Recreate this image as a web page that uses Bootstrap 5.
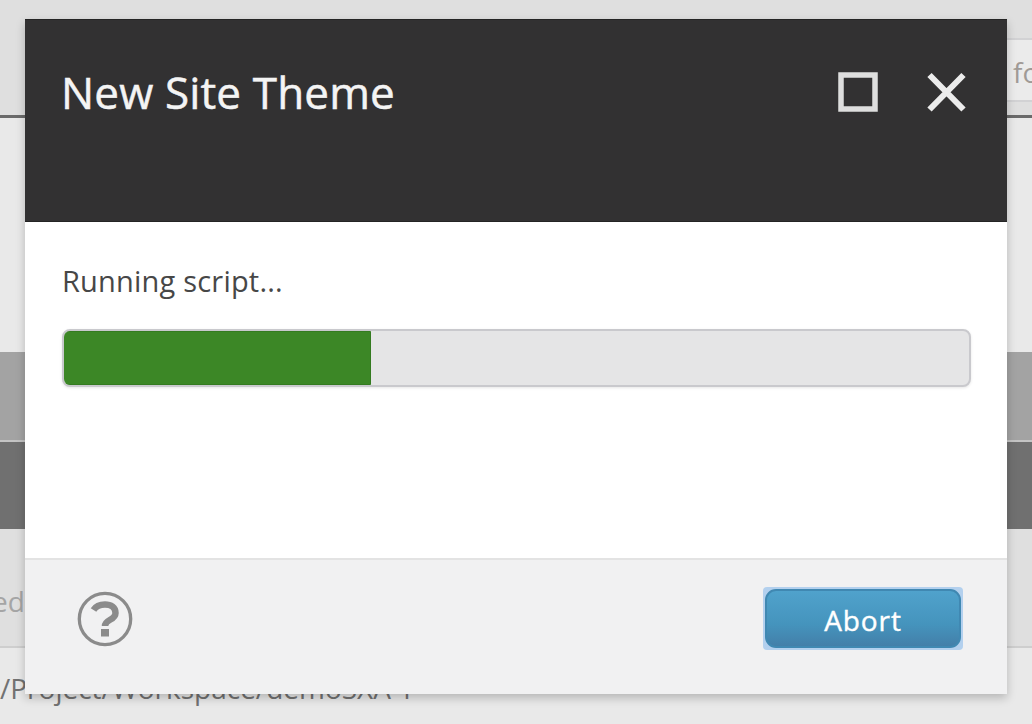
<!DOCTYPE html>
<html lang="en">
<head>
<meta charset="utf-8">
<title>New Site Theme</title>
<link href="https://cdn.jsdelivr.net/npm/bootstrap@5.3.0/dist/css/bootstrap.min.css" rel="stylesheet">
<style>
body { font-family: "Open Sans", "Noto Sans", sans-serif; color: #474747; background: #e9e9e9; }
.desk { width: 1032px; height: 724px; }
.bg-top { height: 118px; background: #dfdfdf; border-bottom: 3px solid #6a6a6a; }
.search-box { width: 34px; height: 64px; margin-top: 38px; padding: 3px 0 0 15px; background: #ebebeb; border: 2px solid #d2d2d4; border-width: 2px 0; font-size: 28px; color: #a09a96; }
.bg-pane { height: 234px; }
.band-light { height: 90px; background: #a3a3a3; border-bottom: 2px solid #c4c4c4; }
.band-deep { height: 87px; background: #707070; }
.col-heads { height: 119px; padding-top: 27px; background: #dfdfdf; border-bottom: 2px solid #cecece; font-size: 28px; color: #a5a5a5; }
.col-label { margin-left: -8px; }
.path-row { height: 76px; padding-top: 19px; font-size: 28px; line-height: 42px; color: #727272; }
.dialog-box { left: 25px; top: 19px; width: 982px; height: 675px; box-shadow: 0 4px 9px rgba(0,0,0,.22); }
.dialog-head { height: 203px; background: #323132; padding: 51px 39px 0 36px; border: 1px solid #242424; border-width: 1px 0; }
.dialog-title { font-size: 44px; line-height: 42px; letter-spacing: .15px; color: #f4f4f4; -webkit-text-stroke: .5px #f4f4f4; }
.dialog-main { height: 336px; padding: 40px 36px 0 37px; }
.run-text { font-size: 29px; line-height: 38px; letter-spacing: .2px; }
.run-bar { height: 58px; margin-top: 29px; border: 2px solid #c9c9cd; border-radius: 8px; background: #e5e5e6; box-shadow: 0 1px 3px rgba(0,0,0,.1); }
.run-bar .progress-bar { margin-left: -1px; background: #3c8726; border: 1px solid #347b20; border-radius: 2px 0 0 2px; }
.dialog-foot { height: 136px; background: #f1f1f2; border-top: 2px solid #e3e3e3; padding: 0 44px 17px 52px; }
.abort-ring { width: 200px; height: 63px; background: #b3d0ee; border-radius: 4px; padding: 2px; }
.abort-btn { font-size: 28px; line-height: 55px; letter-spacing: .9px; color: #fff; border: 2px solid #4088b2; border-radius: 11px; background: linear-gradient(#50a2cc, #4594bd 60%, #437fa9); -webkit-text-stroke: .4px #fff; }
.abort-btn span { padding-top: 4px; }
</style>
</head>
<body>
<div class="desk position-relative overflow-hidden">
  <div class="bg-top d-flex justify-content-end"><div class="search-box d-flex align-items-center overflow-hidden">fo</div></div>
  <div class="bg-pane"></div>
  <div class="band-light"></div>
  <div class="band-deep"></div>
  <div class="col-heads d-flex align-items-center"><span class="col-label">ed</span></div>
  <div class="path-row text-nowrap">/Project/Workspace/demoSXA 1</div>

  <section class="dialog-box position-absolute bg-white d-flex flex-column">
    <header class="dialog-head d-flex justify-content-between align-items-start">
      <h1 class="dialog-title fw-normal m-0">New Site Theme</h1>
      <svg width="130" height="44" viewBox="0 0 130 44" fill="none">
        <path d="M3 4H37V38H3Z" stroke="#dedede" stroke-width="5.500"/>
        <path d="M91.500 4L125.500 38.500M125.500 4L91.500 38.500" stroke="#ececec" stroke-width="6"/>
      </svg>
    </header>
    <div class="dialog-main">
      <div class="run-text">Running script...</div>
      <div class="run-bar progress"><div class="progress-bar" style="width:34%"></div></div>
    </div>
    <footer class="dialog-foot d-flex align-items-center justify-content-between">
      <svg width="56" height="56" viewBox="0 0 56 56" fill="none" stroke="#8b8b8b">
        <circle cx="28" cy="28" r="25.700" stroke-width="3.300"/>
        <path d="M16.500 19C19 15 23 13.500 28 13.500C34 13.500 38.500 16.500 38.500 22C38.500 29.500 28 28 28 35" stroke-width="6.500"/>
        <path d="M24 38H32V45.500H24Z" fill="#8b8b8b" stroke="none"/>
      </svg>
      <div class="abort-ring"><button type="button" class="abort-btn btn w-100 h-100 p-0 d-flex align-items-center justify-content-center"><span>Abort</span></button></div>
    </footer>
  </section>
</div>
<script src="https://cdn.jsdelivr.net/npm/bootstrap@5.3.0/dist/js/bootstrap.bundle.min.js"></script>
</body>
</html>
